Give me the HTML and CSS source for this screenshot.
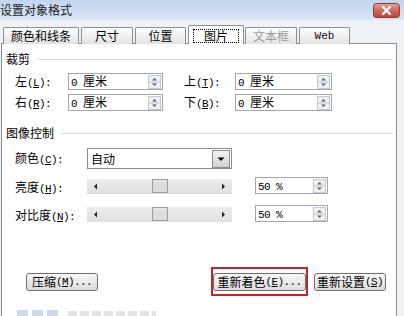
FILE: index.html
```html
<!DOCTYPE html>
<html>
<head>
<meta charset="utf-8">
<link rel="stylesheet" href="styles.css">
</head>
<body>
<div class="titlebar">
  <span class="title">设置对象格式</span>
  <span class="close">
    <svg width="27" height="15" viewBox="0 0 27 15">
      <defs>
        <linearGradient id="cg" x1="0" y1="0" x2="0" y2="1">
          <stop offset="0" stop-color="#e8a59a"/>
          <stop offset="0.5" stop-color="#d0655a"/>
          <stop offset="1" stop-color="#c0463a"/>
        </linearGradient>
      </defs>
      <rect x="0.5" y="0.5" width="26" height="14" rx="3" fill="url(#cg)" stroke="#8e3a32"/>
      <path d="M10 4 L17 11 M17 4 L10 11" stroke="#fff" stroke-width="2.4" stroke-linecap="round"/>
    </svg>
  </span>
</div>
<div class="tabs">
  <div class="tab w1">颜色和线条</div>
  <div class="tab w2">尺寸</div>
  <div class="tab w3">位置</div>
  <div class="tab sel"><span class="focus">图片</span></div>
  <div class="tab w5 dis">文本框</div>
  <div class="tab w6 web">Web</div>
</div>
<div class="panel">
  <div class="group-h"><span>裁剪</span><i class="rule r1"></i></div>

  <div class="crop-row">
    <span class="lab lab1">左<span class="k">(<u>L</u>):</span></span>
    <div class="spin s95"><span class="val"><span class="k">0 </span>厘米</span>
      <svg class="spb" width="13" height="14" viewBox="0 0 13 14"><rect x="0.5" y="0.5" width="12" height="13" fill="#edf0f4" stroke="#c3cad3"/><line x1="1" y1="7" x2="12" y2="7" stroke="#c3cad3"/><path d="M4 5.5 L6.5 3 L9 5.5Z" fill="#5b6672"/><path d="M4 8.5 L6.5 11 L9 8.5Z" fill="#5b6672"/></svg>
    </div>
    <span class="lab lab2">上<span class="k">(<u>T</u>):</span></span>
    <div class="spin s97"><span class="val"><span class="k">0 </span>厘米</span>
      <svg class="spb" width="13" height="14" viewBox="0 0 13 14"><rect x="0.5" y="0.5" width="12" height="13" fill="#edf0f4" stroke="#c3cad3"/><line x1="1" y1="7" x2="12" y2="7" stroke="#c3cad3"/><path d="M4 5.5 L6.5 3 L9 5.5Z" fill="#5b6672"/><path d="M4 8.5 L6.5 11 L9 8.5Z" fill="#5b6672"/></svg>
    </div>
  </div>

  <div class="crop-row row2">
    <span class="lab lab1">右<span class="k">(<u>R</u>):</span></span>
    <div class="spin s95"><span class="val"><span class="k">0 </span>厘米</span>
      <svg class="spb" width="13" height="14" viewBox="0 0 13 14"><rect x="0.5" y="0.5" width="12" height="13" fill="#edf0f4" stroke="#c3cad3"/><line x1="1" y1="7" x2="12" y2="7" stroke="#c3cad3"/><path d="M4 5.5 L6.5 3 L9 5.5Z" fill="#5b6672"/><path d="M4 8.5 L6.5 11 L9 8.5Z" fill="#5b6672"/></svg>
    </div>
    <span class="lab lab2">下<span class="k">(<u>B</u>):</span></span>
    <div class="spin s97"><span class="val"><span class="k">0 </span>厘米</span>
      <svg class="spb" width="13" height="14" viewBox="0 0 13 14"><rect x="0.5" y="0.5" width="12" height="13" fill="#edf0f4" stroke="#c3cad3"/><line x1="1" y1="7" x2="12" y2="7" stroke="#c3cad3"/><path d="M4 5.5 L6.5 3 L9 5.5Z" fill="#5b6672"/><path d="M4 8.5 L6.5 11 L9 8.5Z" fill="#5b6672"/></svg>
    </div>
  </div>

  <div class="group-h g2"><span>图像控制</span><i class="rule r2"></i></div>

  <div class="ctl-row combo-row">
    <span class="lab lab3">颜色<span class="k">(<u>C</u>):</span></span>
    <div class="combo"><span class="val">自动</span>
      <svg class="cbtn" width="18" height="18" viewBox="0 0 18 18"><defs><linearGradient id="bg1" x1="0" y1="0" x2="0" y2="1"><stop offset="0" stop-color="#f4f4f4"/><stop offset="1" stop-color="#d2d2d2"/></linearGradient></defs><rect x="0.5" y="0.5" width="17" height="17" fill="url(#bg1)" stroke="#8d8d8d"/><path d="M5.5 7.5 H12.5 L9 11Z" fill="#000"/></svg>
    </div>
  </div>

  <div class="ctl-row slide-row">
    <span class="lab lab3">亮度<span class="k">(<u>H</u>):</span></span>
    <div class="slider">
      <svg width="145" height="15" viewBox="0 0 145 15"><path d="M7 7.5 L10 4.5 L10 10.5Z" fill="#222"/><path d="M138 7.5 L135 4.5 L135 10.5Z" fill="#222"/><rect x="65.5" y="0.5" width="15" height="13" fill="#dcdcdc" stroke="#9e9e9e"/><line x1="67" y1="2" x2="79" y2="2" stroke="#f2f2f2"/></svg>
    </div>
    <div class="spin s73"><span class="val"><span class="k">50 %</span></span>
      <svg class="spb" width="13" height="14" viewBox="0 0 13 14"><rect x="0.5" y="0.5" width="12" height="13" fill="#edf0f4" stroke="#c3cad3"/><line x1="1" y1="7" x2="12" y2="7" stroke="#c3cad3"/><path d="M4 5.5 L6.5 3 L9 5.5Z" fill="#5b6672"/><path d="M4 8.5 L6.5 11 L9 8.5Z" fill="#5b6672"/></svg>
    </div>
  </div>

  <div class="ctl-row slide-row row-b">
    <span class="lab lab3">对比度<span class="k">(<u>N</u>):</span></span>
    <div class="slider">
      <svg width="145" height="15" viewBox="0 0 145 15"><path d="M7 7.5 L10 4.5 L10 10.5Z" fill="#222"/><path d="M138 7.5 L135 4.5 L135 10.5Z" fill="#222"/><rect x="65.5" y="0.5" width="15" height="13" fill="#dcdcdc" stroke="#9e9e9e"/><line x1="67" y1="2" x2="79" y2="2" stroke="#f2f2f2"/></svg>
    </div>
    <div class="spin s73"><span class="val"><span class="k">50 %</span></span>
      <svg class="spb" width="13" height="14" viewBox="0 0 13 14"><rect x="0.5" y="0.5" width="12" height="13" fill="#edf0f4" stroke="#c3cad3"/><line x1="1" y1="7" x2="12" y2="7" stroke="#c3cad3"/><path d="M4 5.5 L6.5 3 L9 5.5Z" fill="#5b6672"/><path d="M4 8.5 L6.5 11 L9 8.5Z" fill="#5b6672"/></svg>
    </div>
  </div>

  <div class="btn-row">
    <div class="btn b1">压缩<span class="k">(<u>M</u>)...</span></div>
    <div class="btn b2 hl">重新着色<span class="k">(<u>E</u>)...</span></div>
    <div class="btn b3">重新设置<span class="k">(<u>S</u>)</span></div>
  </div>

  <div class="faint"><span class="blob"></span><span class="blob"></span><span class="blob"></span><span class="bar"></span></div>
</div>
</body>
</html>
```

FILE: styles.css
```css
html, body {
  margin: 0;
  padding: 0;
}
body {
  width: 404px;
  height: 316px;
  overflow: hidden;
  background: #eef1f5;
  font-family: "Noto Sans CJK SC", "Noto Sans", sans-serif;
  font-size: 12px;
  line-height: 14px;
  color: #000;
}
.k {
  font-family: "Liberation Mono", monospace;
  font-size: 11px;
  letter-spacing: -0.6px;
}
u {
  text-decoration: underline;
}
.titlebar {
  height: 20px;
  display: flex;
  align-items: center;
  justify-content: space-between;
  background: linear-gradient(#c2d6ee, #d7e4f4);
}
.title {
  margin-left: 0;
  color: #1b1b1b;
}
.close {
  display: flex;
  margin-right: 4px;
}
.tabs {
  height: 24px;
  display: flex;
  align-items: flex-end;
  padding-left: 3px;
  position: relative;
  z-index: 1;
}
.tab {
  box-sizing: border-box;
  height: 17px;
  margin-right: 2px;
  border: 1px solid #8f8f8f;
  border-bottom: none;
  border-radius: 2px 2px 0 0;
  background: linear-gradient(#fefefe, #e2e2e2);
  display: flex;
  align-items: center;
  justify-content: center;
  line-height: 14px;
}
.w1 { width: 76px; }
.w2 { width: 52px; }
.w3 { width: 51px; }
.w5 { width: 52px; }
.w6 { width: 51px; }
.sel {
  width: 56px;
  height: 19px;
  margin-right: 1px;
  background: #fff;
  padding-top: 2px;
}
.focus {
  border: 1px dotted #000;
  padding: 0 10px;
  line-height: 12px;
}
.dis {
  color: #9c9c9c;
}
.web {
  font-family: "Liberation Mono", monospace;
  font-size: 11px;
  color: #111;
}
.panel {
  box-sizing: border-box;
  width: 396px;
  height: 273px;
  margin-left: 1px;
  margin-top: -1px;
  border: 1px solid #8d8d8d;
  border-bottom: none;
  background: #fff;
  display: flex;
  flex-direction: column;
}
.group-h {
  margin-top: 8px;
  height: 14px;
  padding-left: 4px;
  display: flex;
  align-items: center;
}
.rule {
  flex: 1;
  height: 1px;
  background: #d6d9dd;
  margin-right: 3px;
  margin-top: 1px;
}
.r1 { margin-left: 8px; }
.r2 { margin-left: 8px; }
.g2 { margin-top: 15px; }
.crop-row {
  margin-top: 7px;
  padding-left: 13px;
  height: 17px;
  display: flex;
  align-items: center;
}
.row2 { margin-top: 4px; }
.lab {
  white-space: nowrap;
}
.lab1 { width: 53px; }
.lab2 { width: 51px; margin-left: 21px; }
.lab3 { width: 72px; }
.spin {
  box-sizing: border-box;
  height: 17px;
  border: 1px solid #a3a7ad;
  background: #fff;
  display: flex;
  align-items: center;
  justify-content: space-between;
  padding-left: 2px;
  padding-right: 1px;
}
.s95 { width: 95px; }
.s97 { width: 97px; }
.s73 { width: 73px; margin-left: 23px; }
.spb {
  display: block;
}
.val {
  white-space: nowrap;
}
.ctl-row {
  padding-left: 13px;
  display: flex;
  align-items: center;
}
.combo-row {
  margin-top: 8px;
  height: 21px;
}
.combo {
  box-sizing: border-box;
  width: 145px;
  height: 21px;
  border: 1px solid #8e8e8e;
  background: #fff;
  display: flex;
  align-items: center;
  justify-content: space-between;
  padding-left: 3px;
  padding-right: 1px;
}
.cbtn { display: block; }
.slide-row {
  margin-top: 8px;
  height: 18px;
  align-items: flex-start;
}
.slide-row .lab {
  margin-top: 3px;
}
.row-b { margin-top: 10px; }
.slider {
  width: 145px;
  height: 15px;
  margin-top: 2px;
  background: linear-gradient(#ececec, #e0e0e0);
}
.slider svg { display: block; }
.btn-row {
  margin-top: 50px;
  height: 18px;
  display: flex;
  align-items: center;
}
.btn {
  box-sizing: border-box;
  height: 18px;
  border: 1px solid #6f6f6f;
  border-radius: 3px;
  background: linear-gradient(#f7f7f7, #dcdcdc);
  display: flex;
  align-items: center;
  justify-content: center;
  white-space: nowrap;
}
.b1 { width: 72px; margin-left: 24px; }
.b2 { width: 93px; margin-left: 115px; }
.b3 { width: 72px; margin-left: 8px; }
.hl {
  position: relative;
}
.hl::after {
  content: "";
  position: absolute;
  top: -7px;
  bottom: -6px;
  left: -3px;
  right: -3px;
  border: 2px solid #c0262c;
}
.faint {
  margin-top: 19px;
  padding-left: 15px;
  display: flex;
  align-items: flex-start;
  gap: 4px;
  height: 8px;
  filter: blur(0.6px);
}
.blob {
  width: 11px;
  height: 8px;
  background: #ccdaeb;
}
.bar {
  width: 88px;
  height: 6px;
  margin-left: 6px;
  margin-top: 1px;
  background: repeating-linear-gradient(90deg, #dfe4ea 0 9px, transparent 9px 12px);
}
```
